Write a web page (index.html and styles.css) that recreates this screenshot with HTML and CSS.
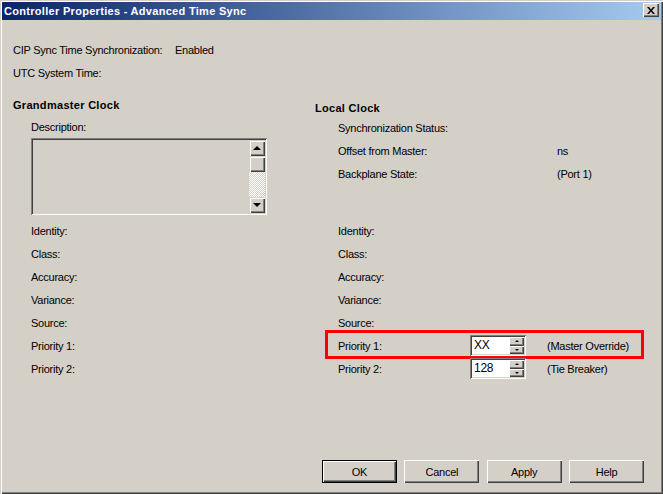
FILE: index.html
```html
<!DOCTYPE html>
<html>
<head>
<meta charset="utf-8">
<link rel="stylesheet" href="styles.css">
</head>
<body>
<div class="window">
  <div class="titlebar">
    <span class="title">Controller Properties - Advanced Time Sync</span>
    <span class="close"><svg width="8" height="7" viewBox="0 0 8 7"><path d="M0 0h2l2 2.5L6 0h2L5 3.5 8 7H6L4 4.5 2 7H0l3-3.5z" fill="#000"/></svg></span>
  </div>
  <div class="body">
    <div class="top">
      <div class="row"><span class="cip-label">CIP Sync Time Synchronization:</span><span>Enabled</span></div>
      <div class="row">UTC System Time:</div>
    </div>
    <div class="upper">
      <div class="col-left">
        <div class="heading gm">Grandmaster Clock</div>
        <div class="row desc">Description:</div>
        <div class="textbox">
          <div class="scrollbar">
            <span class="sb-btn"><span class="tri-up"></span></span>
            <span class="sb-thumb"></span>
            <span class="sb-track"></span>
            <span class="sb-btn"><span class="tri-down"></span></span>
          </div>
        </div>
      </div>
      <div class="col-right">
        <div class="heading lc">Local Clock</div>
        <div class="row">Synchronization Status:</div>
        <div class="row kv"><span>Offset from Master:</span><span>ns</span></div>
        <div class="row kv"><span>Backplane State:</span><span>(Port 1)</span></div>
      </div>
    </div>
    <div class="lower">
      <div class="lrow"><div class="lcell">Identity:</div><div class="rcell">Identity:</div></div>
      <div class="lrow"><div class="lcell">Class:</div><div class="rcell">Class:</div></div>
      <div class="lrow"><div class="lcell">Accuracy:</div><div class="rcell">Accuracy:</div></div>
      <div class="lrow"><div class="lcell">Variance:</div><div class="rcell">Variance:</div></div>
      <div class="lrow"><div class="lcell">Source:</div><div class="rcell">Source:</div></div>
      <div class="lrow">
        <div class="lcell">Priority 1:</div>
        <div class="rcell prio">
          <span>Priority 1:</span>
          <span class="spin"><span class="spin-val">XX</span><span class="spin-btns"><span class="sp-btn"><span class="stri-up"></span></span><span class="sp-btn"><span class="stri-down"></span></span></span></span>
          <span>(Master Override)</span>
          <span class="highlight"></span>
        </div>
      </div>
      <div class="lrow">
        <div class="lcell">Priority 2:</div>
        <div class="rcell prio">
          <span>Priority 2:</span>
          <span class="spin"><span class="spin-val">128</span><span class="spin-btns"><span class="sp-btn"><span class="stri-up"></span></span><span class="sp-btn"><span class="stri-down"></span></span></span></span>
          <span>(Tie Breaker)</span>
        </div>
      </div>
    </div>
    <div class="buttons">
      <button class="btn default">OK</button>
      <button class="btn">Cancel</button>
      <button class="btn">Apply</button>
      <button class="btn">Help</button>
    </div>
  </div>
</div>
</body>
</html>
```
FILE: styles.css
```css
html, body {
  margin: 0;
  padding: 0;
  background: #D4D0C8;
}
body {
  font-family: "Liberation Sans", Arial, sans-serif;
  font-size: 11px;
  letter-spacing: -0.25px;
  color: #000;
}
.window {
  width: 663px;
  height: 494px;
  box-sizing: border-box;
  padding: 2px;
  background: #D4D0C8;
  box-shadow: inset 1px 1px #D4D0C8, inset 2px 2px #fff, inset -1px -1px #404040, inset -2px -2px #808080;
  display: flex;
  flex-direction: column;
}
.titlebar {
  height: 18px;
  flex: none;
  display: flex;
  align-items: flex-start;
  justify-content: space-between;
  padding: 0 2px;
  background: linear-gradient(to right, #0A246A, #A6CAF0);
}
.title {
  color: #fff;
  font-weight: bold;
  font-size: 11px;
  line-height: 18px;
  letter-spacing: 0.3px;
}
.close {
  margin-top: 1px;
  width: 16px;
  height: 14px;
  box-sizing: border-box;
  background: #D4D0C8;
  box-shadow: inset 1px 1px #fff, inset -1px -1px #404040, inset -2px -2px #808080;
  display: flex;
  align-items: center;
  justify-content: center;
  padding-right: 1px;
}
.body {
  flex: 1;
  display: flex;
  flex-direction: column;
  padding: 18px 0 0 11px;
}
.row {
  height: 23px;
  display: flex;
  align-items: center;
  white-space: nowrap;
}
.cip-label {
  width: 162px;
}
.upper {
  height: 135px;
  display: grid;
  grid-template-columns: 302px 1fr;
}
.heading {
  font-weight: bold;
  letter-spacing: 0.3px;
  display: flex;
  align-items: center;
}
.gm {
  margin-top: 9px;
  height: 23px;
}
.lc {
  margin-top: 16px;
  height: 16px;
}
.desc {
  height: 22px;
  padding-left: 18px;
}
.col-right .row {
  padding-left: 23px;
}
.kv {
  display: grid;
  grid-template-columns: 219px auto;
  align-items: center;
}
.textbox {
  margin-left: 18px;
  width: 236px;
  height: 77px;
  box-sizing: border-box;
  padding: 2px;
  background: #D4D0C8;
  box-shadow: inset 1px 1px #808080, inset -1px -1px #fff, inset 2px 2px #404040, inset -2px -2px #D4D0C8;
  display: flex;
  justify-content: flex-end;
}
.scrollbar {
  width: 16px;
  display: flex;
  flex-direction: column;
}
.sb-btn, .sb-thumb {
  width: 16px;
  height: 16px;
  box-sizing: border-box;
  background: #D4D0C8;
  box-shadow: inset 1px 1px #D4D0C8, inset 2px 2px #fff, inset -1px -1px #404040, inset -2px -2px #808080;
  display: flex;
  align-items: center;
  justify-content: center;
  flex: none;
}
.sb-track {
  flex: 1;
  background: repeating-conic-gradient(#fff 0 25%, #D4D0C8 0 50%) 0 0 / 2px 2px;
}
.tri-up, .tri-down {
  width: 0;
  height: 0;
  border-left: 4px solid transparent;
  border-right: 4px solid transparent;
}
.tri-up {
  border-bottom: 4px solid #000;
  margin-top: -1px;
}
.tri-down {
  border-top: 4px solid #000;
}
.lower {
  display: flex;
  flex-direction: column;
}
.lrow {
  height: 23px;
  display: grid;
  grid-template-columns: 302px 1fr;
}
.lcell, .rcell {
  display: flex;
  align-items: center;
  white-space: nowrap;
}
.lcell {
  padding-left: 18px;
}
.rcell {
  padding-left: 23px;
}
.prio {
  position: relative;
  display: grid;
  grid-template-columns: 132px 77px auto;
  align-items: center;
}
.spin {
  width: 56px;
  height: 21px;
  box-sizing: border-box;
  padding: 2px;
  background: #fff;
  box-shadow: inset 1px 1px #808080, inset -1px -1px #fff, inset 2px 2px #404040, inset -2px -2px #D4D0C8;
  display: flex;
}
.spin-val {
  flex: 1;
  padding-left: 2px;
  font-size: 12px;
  line-height: 17px;
}
.spin-btns {
  width: 15px;
  display: flex;
  flex-direction: column;
}
.sp-btn {
  flex: 1;
  background: #D4D0C8;
  box-shadow: inset 1px 1px #fff, inset -1px -1px #404040, inset -2px -2px #808080;
  display: flex;
  align-items: center;
  justify-content: center;
}
.stri-up, .stri-down {
  width: 0;
  height: 0;
  border-left: 2px solid transparent;
  border-right: 2px solid transparent;
}
.stri-up {
  border-bottom: 2px solid #000;
}
.stri-down {
  border-top: 2px solid #000;
}
.highlight {
  position: absolute;
  left: 10px;
  top: -4px;
  width: 319px;
  height: 29px;
  box-sizing: border-box;
  border: 3px solid #f00;
  pointer-events: none;
}
.buttons {
  margin-top: 80px;
  padding-right: 17px;
  display: flex;
  justify-content: flex-end;
  gap: 7.33px;
}
.btn {
  width: 75px;
  height: 23px;
  box-sizing: border-box;
  margin: 0;
  padding: 0;
  border: none;
  font-family: "Liberation Sans", Arial, sans-serif;
  font-size: 11px;
  letter-spacing: -0.25px;
  color: #000;
  background: #D4D0C8;
  box-shadow: inset 1px 1px #fff, inset -1px -1px #404040, inset -2px -2px #808080;
}
.btn.default {
  box-shadow: inset 0 0 0 1px #000, inset 2px 2px #fff, inset -2px -2px #404040, inset -3px -3px #808080;
}
```
